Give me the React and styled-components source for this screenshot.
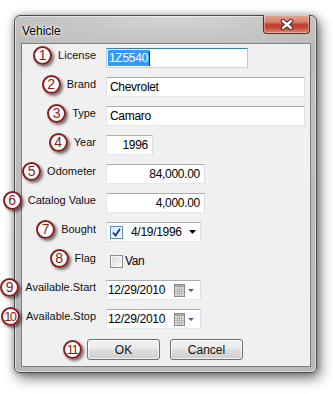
import React from 'react';
import styled, { createGlobalStyle } from 'styled-components';

const GlobalStyle = createGlobalStyle`
  html, body {
    margin: 0;
    padding: 0;
    background: #fff;
  }
  body {
    font-family: "Liberation Sans", Arial, sans-serif;
    font-size: 11px;
    color: #111;
  }
`;

const Page = styled.div`
  width: 333px;
  height: 394px;
  box-sizing: border-box;
  padding: 15px 0 0 14px;
  overflow: hidden;
`;

const Window = styled.div`
  width: 303px;
  height: 358px;
  box-sizing: border-box;
  border: 1px solid #4b4b4b;
  border-radius: 6px 6px 5px 5px;
  padding: 0 5px 5px 6px;
  display: flex;
  flex-direction: column;
  background: radial-gradient(ellipse 70% 40px at 52% 0%, #d6d6d6 0%, #c4c4c4 60%, #bcbcbc 100%) top / 100% 60px no-repeat,
    linear-gradient(180deg, #c0c0c0 0%, #b9b9b9 100%);
  box-shadow: inset 0 0 0 1px rgba(255, 255, 255, 0.5), 3px 5px 13px rgba(0, 0, 0, 0.55),
    0 0 6px rgba(0, 0, 0, 0.25);
`;

const TitleBar = styled.div`
  height: 27px;
  display: flex;
  justify-content: space-between;
  align-items: flex-start;
`;

const Title = styled.span`
  font-size: 12px;
  color: #000;
  margin: 8px 0 0 1px;
  text-shadow: 0 0 5px #fff, 0 0 3px #fff;
`;

const CloseButton = styled.div`
  width: 47px;
  height: 19px;
  margin: -1px 1px 0 0;
  box-sizing: border-box;
  border: 1px solid #5e2a22;
  border-top: none;
  border-radius: 0 0 4px 4px;
  display: flex;
  align-items: center;
  justify-content: center;
  background: linear-gradient(180deg, #e6a597 0%, #d8806f 38%, #c2412d 52%, #c4472f 68%, #dc8571 100%);
  box-shadow: inset 0 0 0 1px rgba(255, 255, 255, 0.35);
`;

const Client = styled.div`
  flex: 1;
  background: #f0f0f0;
  border: 1px solid #7f7f7f;
  padding-top: 4px;
  display: flex;
  flex-direction: column;
  gap: 9px;
`;

const Row = styled.div`
  display: flex;
  align-items: center;
  height: 20px;
`;

const LabelCell = styled.div`
  width: 74px;
  flex-shrink: 0;
  margin-right: 10px;
  align-self: flex-start;
  height: 14px;
  display: flex;
  justify-content: flex-end;
  align-items: center;
  gap: 6px;
  white-space: nowrap;
  font-size: 11px;
  color: #111;
`;

const Badge = styled.span`
  width: 19px;
  height: 19px;
  flex-shrink: 0;
  box-sizing: border-box;
  border-radius: 50%;
  border: 2px solid #8b1c1c;
  background: radial-gradient(circle at 40% 35%, #fff 55%, #e6e6e6 100%);
  color: #8b1c1c;
  font-size: ${p => (p.$wide ? '13px' : '14px')};
  letter-spacing: ${p => (p.$wide ? '-1.5px' : '0')};
  text-indent: ${p => (p.$wide ? '-1px' : '0')};
  line-height: 1;
  display: flex;
  align-items: center;
  justify-content: center;
  box-shadow: 2px 2px 3px rgba(0, 0, 0, 0.55);
`;

const Field = styled.div`
  width: ${p => p.$w}px;
  height: 20px;
  box-sizing: border-box;
  background: #fff;
  border: 1px solid;
  border-color: ${p => (p.$focus ? '#3d7bad #a4c9e3 #b7d9ed #b5cfe7' : '#abadb3 #dbdfe6 #e3e9ef #e2e3ea')};
  display: flex;
  align-items: center;
  justify-content: ${p => (p.$right ? 'flex-end' : 'flex-start')};
  padding: 0 ${p => (p.$right ? 4 : 1)}px 0 ${p => p.$pl ?? 1}px;
  font-size: 12px;
  letter-spacing: -0.3px;
  color: #000;
  white-space: nowrap;
`;

const Selected = styled.span`
  background: #3399ff;
  color: #fff;
  line-height: 16px;
  padding: 0 1px;
`;

const Caret = styled.span`
  width: 1px;
  height: 15px;
  background: #3a2a10;
`;

const Check = styled.span`
  width: 13px;
  height: 13px;
  flex-shrink: 0;
  box-sizing: border-box;
  border: 1px solid ${p => (p.$on ? '#5a8cbd' : '#8f8f8f')};
  background: ${p => (p.$on ? 'linear-gradient(135deg, #d6e6f6, #fdfeff)' : 'linear-gradient(135deg, #d6d6d6, #fbfbfb)')};
  box-shadow: inset 0 0 0 1px #f6f6f6;
  display: flex;
  align-items: center;
  justify-content: center;
`;

const Gap = styled.span`
  width: ${p => p.$w}px;
  flex-shrink: 0;
`;

const Spacer = styled.span`
  flex: 1;
`;

const PlainRow = styled.div`
  display: flex;
  align-items: center;
  gap: 2px;
  padding-left: 4px;
  font-size: 12px;
  letter-spacing: -0.4px;
  color: #000;
`;

const ButtonRow = styled.div`
  display: flex;
  justify-content: center;
  gap: 10px;
  margin-top: 1px;
  padding-right: 2px;
`;

const ButtonWrap = styled.div`
  position: relative;
`;

const ButtonBadge = styled.div`
  position: absolute;
  right: calc(100% + 5px);
  top: 1px;
`;

const Button = styled.div`
  width: 73px;
  height: 21px;
  box-sizing: border-box;
  border: 1px solid #707070;
  border-radius: 3px;
  background: linear-gradient(180deg, #f2f2f2 0%, #ebebeb 48%, #dddddd 52%, #cfcfcf 100%);
  box-shadow: inset 0 0 0 1px rgba(255, 255, 255, 0.7);
  display: flex;
  align-items: center;
  justify-content: center;
  font-size: 12px;
  color: #111;
`;

const CloseX = () => (
  <svg width="14" height="11" viewBox="0 0 14 11">
    <path d="M3 2 L11 9 M11 2 L3 9" stroke="#3b2b28" strokeWidth="4.4" strokeLinecap="round" />
    <path d="M3 2 L11 9 M11 2 L3 9" stroke="#fff" strokeWidth="2.4" strokeLinecap="round" />
  </svg>
);

const CheckMark = () => (
  <svg width="9" height="9" viewBox="0 0 9 9">
    <path d="M1 4.5 L3.5 7.5 L8 1" fill="none" stroke="#1b2a8a" strokeWidth="1.8" />
  </svg>
);

const DropArrow = ({ color = '#000', w = 7, h = 4 }) => (
  <svg width={w} height={h} viewBox={`0 0 ${w} ${h}`}>
    <polygon points={`0,0 ${w},0 ${w / 2},${h}`} fill={color} />
  </svg>
);

const CalendarIcon = () => (
  <svg width="11" height="13" viewBox="0 0 11 13">
    <rect x="0.5" y="0.5" width="10" height="12" fill="#e4e4e4" stroke="#8a8a8a" />
    <rect x="1" y="1" width="9" height="2" fill="#a8a8a8" />
    <path d="M1 5.5 H10 M1 7.5 H10 M1 9.5 H10 M3.5 3 V12 M5.5 3 V12 M7.5 3 V12" stroke="#b4b4b4" strokeWidth="1" />
  </svg>
);

const FormRow = ({ n, label, children }) => (
  <Row>
    <LabelCell>
      <Badge $wide={n > 9}>{n}</Badge>
      <span>{label}</span>
    </LabelCell>
    {children}
  </Row>
);

const DateField = ({ value }) => (
  <Field $w={95}>
    <span>{value}</span>
    <Spacer />
    <CalendarIcon />
    <Gap $w={3} />
    <DropArrow color="#4f5d82" w={6} h={3} />
    <Gap $w={5} />
  </Field>
);

export default function App() {
  return (
    <Page>
      <GlobalStyle />
      <Window>
        <TitleBar>
          <Title>Vehicle</Title>
          <CloseButton>
            <CloseX />
          </CloseButton>
        </TitleBar>
        <Client>
          <FormRow n={1} label="License">
            <Field $w={142} $focus $pl={1}>
              <Selected>1Z5540</Selected>
              <Caret />
            </Field>
          </FormRow>
          <FormRow n={2} label="Brand">
            <Field $w={199} $pl={3}>Chevrolet</Field>
          </FormRow>
          <FormRow n={3} label="Type">
            <Field $w={199} $pl={3}>Camaro</Field>
          </FormRow>
          <FormRow n={4} label="Year">
            <Field $w={47} $right>1996</Field>
          </FormRow>
          <FormRow n={5} label="Odometer">
            <Field $w={99} $right>84,000.00</Field>
          </FormRow>
          <FormRow n={6} label="Catalog Value">
            <Field $w={99} $right>4,000.00</Field>
          </FormRow>
          <FormRow n={7} label="Bought">
            <Field $w={95} $pl={3}>
              <Check $on>
                <CheckMark />
              </Check>
              <Gap $w={8} />
              <span>4/19/1996</span>
              <Spacer />
              <DropArrow />
              <Gap $w={3} />
            </Field>
          </FormRow>
          <FormRow n={8} label="Flag">
            <PlainRow>
              <Check />
              <span>Van</span>
            </PlainRow>
          </FormRow>
          <FormRow n={9} label="Available.Start">
            <DateField value="12/29/2010" />
          </FormRow>
          <FormRow n={10} label="Available.Stop">
            <DateField value="12/29/2010" />
          </FormRow>
          <ButtonRow>
            <ButtonWrap>
              <ButtonBadge>
                <Badge $wide>11</Badge>
              </ButtonBadge>
              <Button>OK</Button>
            </ButtonWrap>
            <Button>Cancel</Button>
          </ButtonRow>
        </Client>
      </Window>
    </Page>
  );
}
